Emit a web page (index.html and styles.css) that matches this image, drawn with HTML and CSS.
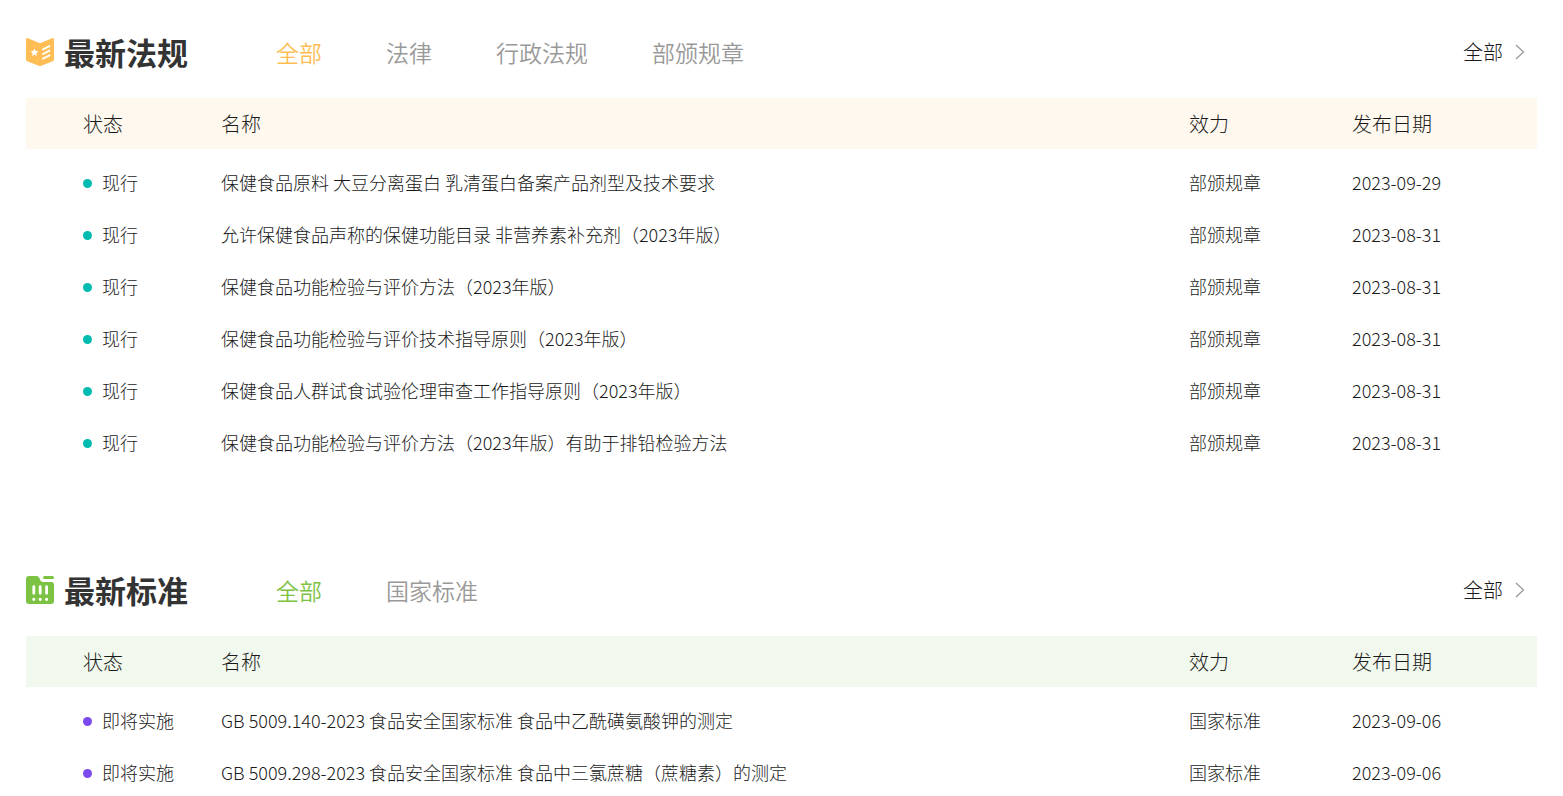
FILE: index.html
```html
<!DOCTYPE html>
<html lang="zh-CN">
<head>
  <meta charset="UTF-8" />
  <meta name="viewport" content="width=device-width, initial-scale=1.0"/>
  <title>最新法规</title>
  <link rel="stylesheet" href="styles.css">
</head>
<body>
  <main class="container">
    <section class="block laws">
      <div class="block-head">
        <svg class="logo" viewBox="0 0 28 28" aria-hidden="true">
          <path fill="currentColor" d="M1.3 0.1 14 5.2 26.7 0.1Q28 -0.2 28 1.2V21.6Q28 22.8 26.9 23.3L15.2 27.7Q14 28.2 12.8 27.7L1.1 23.3Q0 22.8 0 21.6V1.2Q0 -0.2 1.3 0.1Z"/>
          <path fill="#fff" d="M8.5 10.4 9.7 13 12.5 13.3 10.4 15.2 11 18 8.5 16.6 6 18 6.6 15.2 4.5 13.3 7.3 13Z"/>
          <path stroke="#fff" stroke-width="1.9" stroke-linecap="round" d="M17 11.4 23.5 8.1M17 16 23.5 12.7M17 20.6 23.5 17.3"/>
        </svg>
        <h2>最新法规</h2>
        <div class="tabs">
          <button type="button" class="tab active">全部</button>
          <button type="button" class="tab">法律</button>
          <button type="button" class="tab">行政法规</button>
          <button type="button" class="tab">部颁规章</button>
        </div>
        <a class="more" href="#">全部
          <svg class="arrow" viewBox="0 0 10 16" aria-hidden="true"><path d="M1 1 8.5 8 1 15"/></svg>
        </a>
      </div>
      <table class="list">
        <thead>
          <tr><th class="col-status">状态</th><th>名称</th><th class="col-level">效力</th><th class="col-date">发布日期</th></tr>
        </thead>
        <tbody>
          <tr><td><span class="dot"></span>现行</td><td>保健食品原料 大豆分离蛋白 乳清蛋白备案产品剂型及技术要求</td><td>部颁规章</td><td>2023-09-29</td></tr>
          <tr><td><span class="dot"></span>现行</td><td>允许保健食品声称的保健功能目录 非营养素补充剂（2023年版）</td><td>部颁规章</td><td>2023-08-31</td></tr>
          <tr><td><span class="dot"></span>现行</td><td>保健食品功能检验与评价方法（2023年版）</td><td>部颁规章</td><td>2023-08-31</td></tr>
          <tr><td><span class="dot"></span>现行</td><td>保健食品功能检验与评价技术指导原则（2023年版）</td><td>部颁规章</td><td>2023-08-31</td></tr>
          <tr><td><span class="dot"></span>现行</td><td>保健食品人群试食试验伦理审查工作指导原则（2023年版）</td><td>部颁规章</td><td>2023-08-31</td></tr>
          <tr><td><span class="dot"></span>现行</td><td>保健食品功能检验与评价方法（2023年版）有助于排铅检验方法</td><td>部颁规章</td><td>2023-08-31</td></tr>
        </tbody>
      </table>
    </section>

    <section class="block standards">
      <div class="block-head">
        <svg class="logo" viewBox="0 0 28 28" aria-hidden="true">
          <path fill="currentColor" d="M3 0H10.5Q12.4 0 13.2 1.8L14.2 4Q15 6 17 6H25Q28 6 28 9V25Q28 28 25 28H3Q0 28 0 25V3Q0 0 3 0Z"/>
          <path stroke="currentColor" stroke-width="3" stroke-linecap="round" d="M18.5 1.6H26.5"/>
          <path stroke="#fff" stroke-width="2.8" stroke-linecap="round" d="M7.8 10.7V17.3M14.2 10.7V17.3M20.6 10.7V17.3"/>
          <path stroke="#fff" stroke-width="3.2" stroke-linecap="round" d="M7.8 23.3h.01M14.2 23.3h.01M20.6 23.3h.01"/>
        </svg>
        <h2>最新标准</h2>
        <div class="tabs">
          <button type="button" class="tab active">全部</button>
          <button type="button" class="tab">国家标准</button>
        </div>
        <a class="more" href="#">全部
          <svg class="arrow" viewBox="0 0 10 16" aria-hidden="true"><path d="M1 1 8.5 8 1 15"/></svg>
        </a>
      </div>
      <table class="list">
        <thead>
          <tr><th class="col-status">状态</th><th>名称</th><th class="col-level">效力</th><th class="col-date">发布日期</th></tr>
        </thead>
        <tbody>
          <tr><td><span class="dot"></span>即将实施</td><td>GB 5009.140-2023 食品安全国家标准 食品中乙酰磺氨酸钾的测定</td><td>国家标准</td><td>2023-09-06</td></tr>
          <tr><td><span class="dot"></span>即将实施</td><td>GB 5009.298-2023 食品安全国家标准 食品中三氯蔗糖（蔗糖素）的测定</td><td>国家标准</td><td>2023-09-06</td></tr>
        </tbody>
      </table>
    </section>
  </main>

  <script>
    document.querySelectorAll(".tabs").forEach((tabs) => {
      tabs.addEventListener("click", (e) => {
        const tab = e.target.closest(".tab");
        if (!tab) return;
        tabs.querySelector(".active").classList.remove("active");
        tab.classList.add("active");
      });
    });
  </script>
</body>
</html>
```
FILE: styles.css
```css
body {
  margin: 0;
  background: #fff;
  color: #1a1a1a;
  font-family: "Noto Sans CJK SC", sans-serif;
  font-size: 18px;
  font-weight: 300;
}
.container {
  padding: 0 26px;
}
.block {
  margin-bottom: 70px;
}
.block:last-child {
  margin-bottom: 0;
}
.laws {
  --main: #ffbe55;
  --head-bg: #fff8ee;
  --dot: #00bbaf;
}
.standards {
  --main: #7cc243;
  --head-bg: #f1f8ed;
  --dot: #7b4aee;
}
.block-head {
  display: flex;
  align-items: center;
  padding: 29px 12px 23px 0;
}
.logo {
  width: 28px;
  height: 28px;
  margin-right: 10px;
  color: var(--main);
  fill: none;
}
h2 {
  margin: 0;
  color: #333;
  font-size: 31px;
  line-height: 46px;
  font-weight: bold;
}
.tabs {
  display: flex;
  gap: 64px;
  margin-left: 88px;
}
.tab {
  padding: 0;
  border: none;
  background: none;
  color: #999;
  font: inherit;
  font-size: 23px;
  font-weight: 350;
  line-height: 46px;
  cursor: pointer;
}
.tab.active {
  color: var(--main);
}
.more {
  display: flex;
  align-items: center;
  gap: 12px;
  margin-left: auto;
  color: #1a1a1a;
  font-size: 20px;
  line-height: 46px;
  text-decoration: none;
}
.arrow {
  width: 10px;
  height: 16px;
  fill: none;
  stroke: #999;
  stroke-width: 1.3;
}
.list {
  width: 100%;
  table-layout: fixed;
  border-collapse: collapse;
}
.list th {
  height: 51px;
  padding: 0;
  background: var(--head-bg);
  font-size: 20px;
  font-weight: 300;
  text-align: left;
}
.list tbody::before {
  content: "";
  display: block;
  height: 7px;
}
.list td {
  height: 52px;
  padding: 0;
  line-height: 26px;
}
.list th:first-child,
.list td:first-child {
  padding-left: 57px;
}
.col-status {
  width: 138px;
}
.col-level {
  width: 163px;
}
.col-date {
  width: 185px;
}
.dot {
  display: inline-block;
  width: 9px;
  height: 9px;
  margin-right: 10px;
  border-radius: 50%;
  background: var(--dot);
  vertical-align: 2px;
}
```
